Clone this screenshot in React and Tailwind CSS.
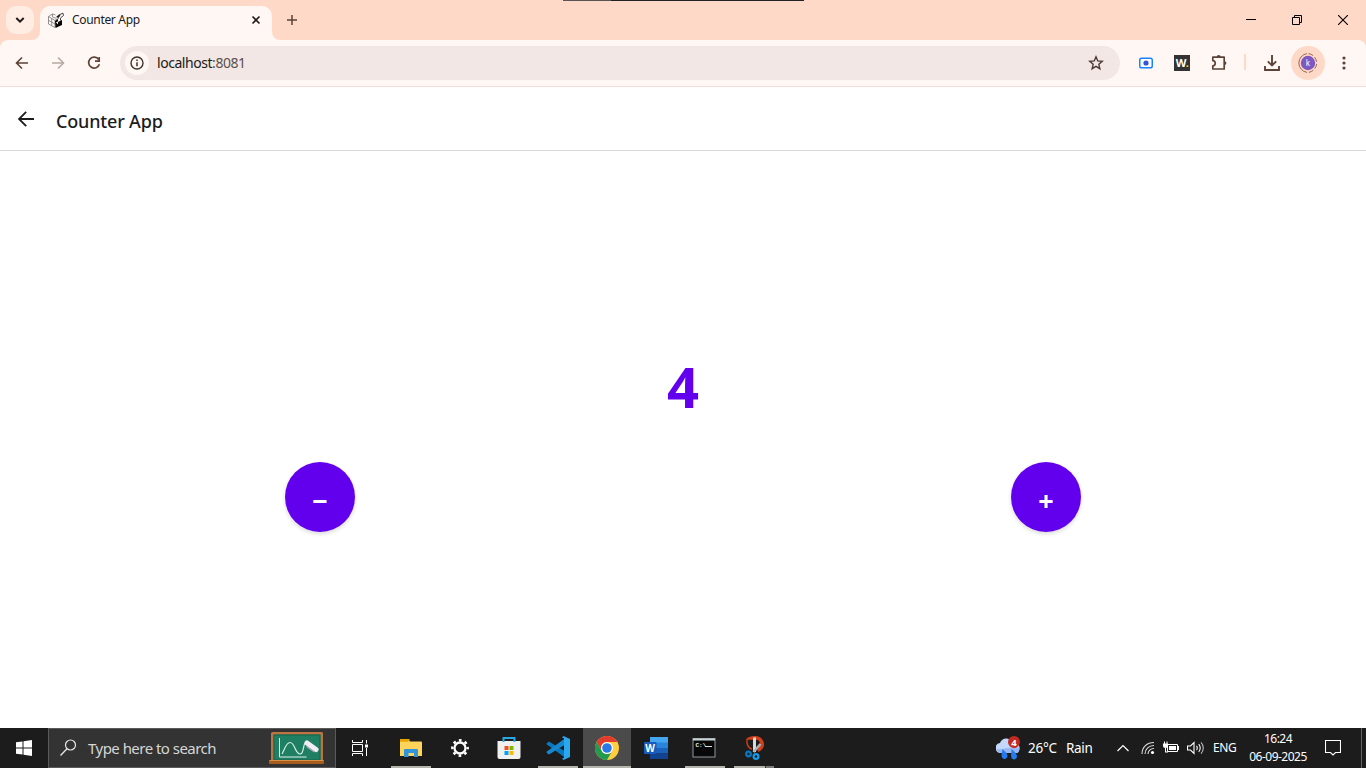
import React from "react";

const Svg = ({ w, h, children, className = "" }) => (
  <svg width={w} height={h} viewBox={`0 0 ${w} ${h}`} fill="none" className={`block shrink-0 ${className}`}>
    {children}
  </svg>
);

const Slot = ({ children, className = "" }) => (
  <div className={`flex h-[34px] w-9 shrink-0 items-center justify-center ${className}`}>{children}</div>
);

function TabStrip() {
  return (
    <div className="flex h-10 bg-[#ffd9c7]">
      <div className="ml-1.5 mt-1.5 flex h-7 w-7 items-center justify-center rounded-[10px] bg-[#ffece3]">
        <Svg w={10} h={8}>
          <path d="M1.3 2l3.7 3.7L8.7 2" stroke="#201a18" strokeWidth="2" />
        </Svg>
      </div>
      <Svg w={8} h={8} className="-ml-0.5 self-end">
        <path d="M8 0v8H0a8 8 0 0 0 8-8z" fill="#fff7f4" />
      </Svg>
      <div className="mt-1.5 flex w-[232px] items-center rounded-t-[10px] bg-[#fff7f4] pb-1.5 pl-2">
        <Svg w={16} h={16}>
          <path d="M.5 4.500l4-2.500 3 1M.5 4.500v7.500l6.500 3.500V8.500zM.5 8.300l6.500 3.700M3.700 6.500v7.200M7 8.500l4-2.500M4.500 2v3l4 1.500" stroke="#777" strokeWidth=".8" />
          <path d="M7 9l3-2v3l4-2v5l-6.500 3z" fill="#050505" />
          <path d="M8 5l3-2.500 1.500 1-2 2.500z" fill="#222" />
          <path d="M11 2.800l4-1.600.5 2.300-3 2.500v2.500" stroke="#444" />
          <path d="M8 10.500l2-1.200v3z" fill="#fff" />
        </Svg>
        <span className="ml-2 w-[174px] whitespace-nowrap text-[12px] leading-4 tracking-[-0.32px] text-[#201a18]">Counter App</span>
        <Svg w={12} h={12} className="ml-1">
          <path d="M2.500 2.500l7 7M9.500 2.500l-7 7" stroke="#201a18" strokeWidth="1.600" />
        </Svg>
      </div>
      <Svg w={8} h={8} className="self-end">
        <path d="M0 0v8h8a8 8 0 0 1-8-8z" fill="#fff7f4" />
      </Svg>
      <Svg w={12} h={12} className="ml-1.5 mt-[14px]">
        <path d="M6 1v10M1 6h10" stroke="#5c4338" strokeWidth="1.500" />
      </Svg>
      <div className="ml-[265px] flex h-px w-[241px] bg-[#202124]">
        <div className="w-12 bg-[#5a5454]" />
      </div>
      <div className="ml-auto flex h-10 items-center">
        <div className="flex w-[46px] justify-center">
          <Svg w={10} h={10}><path d="M0 4.500h10" stroke="#000" /></Svg>
        </div>
        <div className="flex w-[46px] justify-center">
          <Svg w={10} h={10}><path d="M.5 2.500h7v7h-7zM2.500 2.500v-2h7v7h-2" stroke="#000" /></Svg>
        </div>
        <div className="flex w-[46px] justify-center">
          <Svg w={10} h={10}><path d="M0 0l10 10M10 0L0 10" stroke="#000" strokeWidth="1.100" /></Svg>
        </div>
      </div>
    </div>
  );
}

function Toolbar() {
  return (
    <div className="h-[47px] bg-[#ffd9c7]">
      <div className="flex h-[47px] rounded-t-lg border-b border-[#f5dfd8] bg-[#fff7f4] px-1 pt-1.5">
        <Slot>
          <Svg w={16} h={16}><path d="M14 8H3M8 2.500L2.500 8 8 13.500" stroke="#5c4338" strokeWidth="1.600" /></Svg>
        </Slot>
        <Slot>
          <Svg w={16} h={16}><path d="M2 8h11M8 2.500l5.500 5.500L8 13.500" stroke="#b9aaa4" strokeWidth="1.600" /></Svg>
        </Slot>
        <Slot>
          <Svg w={16} h={16}>
            <path d="M12.700 4.500A5.500 5.500 0 1 0 13.400 9.300" stroke="#5c4338" strokeWidth="1.700" />
            <path d="M13.200 2v4.200H9" stroke="#5c4338" strokeWidth="1.700" />
          </Svg>
        </Slot>
        <div className="ml-2 mr-2 flex h-[34px] w-[1000px] items-center rounded-full bg-[#f2e7e4] pl-[5px]">
          <div className="flex h-6 w-6 items-center justify-center rounded-full bg-[#fff7f4]">
            <Svg w={14} h={14}>
              <circle cx="7" cy="7" r="6" stroke="#40322d" strokeWidth="1.400" />
              <path d="M7 6.200v4M7 3.500v1.500" stroke="#40322d" strokeWidth="1.500" />
            </Svg>
          </div>
          <span className="ml-2 text-[14px] leading-5 tracking-[-0.45px] text-[#201a18]">
            localhost<span className="text-[#5c504b]">:8081</span>
          </span>
          <Svg w={16} h={16} className="ml-auto mr-4">
            <path d="M8 1.800l1.750 4.150 4.500.4-3.400 2.950 1 4.400L8 11.350 4.150 13.700l1-4.400-3.400-2.950 4.500-.4z" stroke="#4a3a34" strokeWidth="1.400" />
          </Svg>
        </div>
        <Slot>
          <Svg w={14} h={12}>
            <rect x=".75" y="1.250" width="12.500" height="9.500" rx="1.800" stroke="#1a82ff" strokeWidth="1.500" fill="#fff" />
            <circle cx="7" cy="6" r="2.600" fill="#3454d8" />
          </Svg>
        </Slot>
        <Slot>
          <div className="flex h-4 w-4 items-center justify-center bg-[#333] text-[11px] font-bold leading-4 tracking-[-0.5px] text-white">
            W<span className="text-[#e8d44d]">.</span>
          </div>
        </Slot>
        <Slot>
          <Svg w={18} h={18} className="ml-0.5">
            <path d="M2.800 3.200H14.200V15H2.800V11.800C6 11.800 6 6.600 2.800 6.600z" stroke="#5c4338" strokeWidth="1.700" strokeLinejoin="round" />
            <path d="M6.700 3a2 2 0 0 1 4 0zM14.500 7.200a1.900 1.900 0 0 1 0 3.800z" fill="#5c4338" />
          </Svg>
        </Slot>
        <div className="flex h-8 w-[18px] items-center justify-center">
          <div className="h-4 w-0.5 bg-[#ffd9c7]" />
        </div>
        <Slot>
          <Svg w={16} h={16}>
            <path d="M8 0v10M3.800 6.300L8 10.500l4.200-4.200M1 11v4h14v-4" stroke="#5c4338" strokeWidth="1.900" />
          </Svg>
        </Slot>
        <Slot>
          <div className="flex h-[34px] w-[34px] shrink-0 items-center justify-center rounded-full bg-[#ffd9c7]">
            <svg width="20" height="20" viewBox="0 0 20 20" fill="none">
              <path d="M9 .6A9.500 9.500 0 0 0 9 19.400" stroke="#8f6a55" strokeWidth="1" />
              <path d="M10.500 .6A9.500 9.500 0 0 1 10.500 19.400" stroke="#8f6a55" strokeWidth="1" strokeDasharray="5 2.200" />
              <circle cx="10" cy="10" r="7.200" fill="#7e57c2" />
              <text x="10" y="12.800" textAnchor="middle" fontSize="8" fill="#fff">k</text>
            </svg>
          </div>
        </Slot>
        <Slot>
          <Svg w={4} h={16}>
            <circle cx="2" cy="3" r="1.600" fill="#5c4338" />
            <circle cx="2" cy="8" r="1.600" fill="#5c4338" />
            <circle cx="2" cy="13" r="1.600" fill="#5c4338" />
          </Svg>
        </Slot>
      </div>
    </div>
  );
}

const RoundButton = ({ children }) => (
  <button className="flex h-[70px] w-[70px] items-center justify-center rounded-full bg-[#6200ee] pt-2 text-[27px] font-bold leading-8 text-white shadow-[0_2px_4px_rgba(0,0,0,0.15)]">
    {children}
  </button>
);

function Counter() {
  return (
    <main className="flex min-h-0 flex-1 flex-col bg-white">
      <div className="flex h-16 items-center border-b border-[#d8d8d8]">
        <Svg w={16} h={16} className="ml-[18px]">
          <path d="M16 8H1.500M8.200 .8L1 8l7.200 7.200" stroke="#1c1c1e" strokeWidth="1.800" />
        </Svg>
        <span className="ml-[22px] pt-1 text-[18px] font-medium leading-6 tracking-[-0.18px] text-[#1c1c1e]">Counter App</span>
      </div>
      <div className="flex flex-1 flex-col pt-[198px]">
        <div className="text-center text-[56px] font-bold leading-[74px] text-[#6200ee]">4</div>
        <div className="mt-[39px] flex justify-between px-[285px]">
          <RoundButton>−</RoundButton>
          <RoundButton>+</RoundButton>
        </div>
      </div>
    </main>
  );
}

const Task = ({ children, active, open, stacked }) => (
  <div className={`mr-px flex h-10 w-12 shrink-0 flex-col items-center ${active ? "bg-[#4b4b4b]" : ""}`}>
    <div className="flex h-[38px] items-center pt-0.5">{children}</div>
    {active && <div className="h-0.5 w-12 bg-[#b5b5ae]" />}
    {open && (
      <div className="flex h-0.5 w-10 justify-end bg-[#b5b5ae]">
        {stacked && <div className="w-[9px] border-l border-[#333] bg-[#7b7b78]" />}
      </div>
    )}
  </div>
);

function Taskbar() {
  return (
    <footer className="flex h-10 shrink-0 bg-[#1c1c1c] text-white">
      <div className="flex w-12 items-center justify-center">
        <Svg w={16} h={16}>
          <path d="M0 2.300L6.500 1.400V7.500H0zM7.500 1.200L16 0v7.500H7.500zM0 8.500h6.500v6.100L0 13.700zM7.500 8.500H16V16l-8.500-1.200z" fill="#fff" />
        </Svg>
      </div>
      <div className="flex w-72 items-center border border-[#5a5a5a] bg-[#333]">
        <Svg w={18} h={18} className="ml-2.5">
          <circle cx="11.500" cy="6" r="5" stroke="#e8e8e8" strokeWidth="1.200" />
          <path d="M8 9.800L1.500 16.500" stroke="#e8e8e8" strokeWidth="1.300" />
        </Svg>
        <span className="ml-[11px] whitespace-nowrap text-[15px] leading-5 tracking-[-0.53px] text-[#d6d6d6]">Type here to search</span>
        <Svg w={56} h={34} className="ml-auto mr-2.5">
          <rect x="2" y="1" width="52" height="30" rx="1.500" fill="#bd7440" />
          <rect x="4.500" y="3.500" width="47" height="26" fill="#1f7f63" />
          <rect x="5" y="4" width="46" height="25" stroke="#17644f" />
          <rect x="0" y="29" width="55" height="4" rx="1" fill="#a75c20" />
          <path d="M.5 29.500h54" stroke="#d99043" />
          <path d="M10.500 7v19h27" stroke="#e4f2e8" strokeWidth="1" />
          <path d="M13 23c3-5 4-11.500 8-11.500 5 0 5 11.500 10 11.500 4 0 2.500-7 5-11" stroke="#d7efe0" strokeWidth="1.200" />
          <path d="M38 12l9 6.500" stroke="#f2edf5" strokeWidth="5" strokeLinecap="round" />
          <path d="M37.500 15.500l8 5.500" stroke="#b7adbd" strokeWidth="1.200" />
        </Svg>
      </div>
      <div className="mr-[3px] flex w-12 items-center justify-center">
        <Svg w={16} h={16}>
          <path d="M.5 0v2.500h10V0M.5 16v-2.500h10V16M.5 4.500h10v7H.5zM14.500 0v3.500M14.500 8v8" stroke="#fff" />
          <path d="M13 4.500h3v3h-3z" fill="#fff" />
        </Svg>
      </div>
      <Task open>
        <Svg w={22} h={20}>
          <path d="M0 1.500h8.500l1.500 2h11a1 1 0 0 1 1 1V18H0z" fill="#ffd45a" />
          <path d="M0 1h9l1 1-2 1.800H0z" fill="#e8a500" />
          <path d="M4 19v-7a1 1 0 0 1 1-1h12a1 1 0 0 1 1 1v7h-4v-4H8.500v4z" fill="#3295dc" />
        </Svg>
      </Task>
      <Task>
        <Svg w={20} h={20}>
          <circle cx="10" cy="10" r="5.500" stroke="#fff" strokeWidth="2.300" />
          <circle cx="10" cy="10" r="7.700" stroke="#fff" strokeWidth="2.400" strokeDasharray="2.700 3.347" strokeDashoffset="1.350" />
        </Svg>
      </Task>
      <Task>
        <Svg w={24} h={24}>
          <path d="M.5 5h23v16a2 2 0 0 1-2 2h-19a2 2 0 0 1-2-2z" fill="#f0f0f0" />
          <path d="M6.500 6V2h11v4" stroke="#28a8e5" strokeWidth="2" />
          <path d="M7.500 10h4v4h-4z" fill="#f25022" />
          <path d="M12.500 10h4v4h-4z" fill="#7fba00" />
          <path d="M7.500 15h4v4h-4z" fill="#00a4ef" />
          <path d="M12.500 15h4v4h-4z" fill="#ffb900" />
        </Svg>
      </Task>
      <Task open>
        <Svg w={24} h={24}>
          <path d="M1.300 7.800L18 20l.8-3.800L3 6.300z" fill="#0879bf" stroke="#0879bf" strokeWidth="1.500" strokeLinejoin="round" />
          <path d="M1.300 16.200L18 4l.8 3.800L3 17.700z" fill="#1688cf" stroke="#1688cf" strokeWidth="1.500" strokeLinejoin="round" />
          <path d="M17.500 0L24 3v18l-6.500 3L16 22.500l2-.8V2.300l-2-.8z" fill="#29a8f0" />
        </Svg>
      </Task>
      <Task active>
        <Svg w={24} h={24}>
          <circle cx="12" cy="12" r="12" fill="#ffcd40" />
          <path d="M1.600 6A12 12 0 0 1 22.400 6H12a6 6 0 0 0-5.200 9z" fill="#e33b2e" />
          <path d="M1.600 6A12 12 0 0 0 12 24l5.200-9A6 6 0 0 1 6.800 15z" fill="#229b50" />
          <circle cx="12" cy="12" r="6" fill="#fff" />
          <circle cx="12" cy="12" r="4.800" fill="#2878e8" />
        </Svg>
      </Task>
      <Task>
        <Svg w={24} h={22}>
          <path d="M6 0h18v6H6z" fill="#43a6ef" />
          <path d="M6 5.500h18V11H6z" fill="#2985dc" />
          <path d="M6 11h18v5.500H6z" fill="#1b62bd" />
          <path d="M6 16.500h18V22H6z" fill="#124390" />
          <rect y="5" width="12.500" height="12" rx="1" fill="#185abd" />
          <text x="6.200" y="14.700" textAnchor="middle" fontSize="10" fontWeight="700" fill="#fff">W</text>
        </Svg>
      </Task>
      <Task open>
        <Svg w={24} h={20} className="-ml-0.5">
          <rect x="1" y=".5" width="22" height="18.500" fill="#080808" stroke="#8d979b" />
          <path d="M1 1.500h22" stroke="#c9d2d5" strokeWidth="2" />
          <text x="3.500" y="9" fontSize="6" fontFamily="Liberation Mono" fontWeight="700" fill="#eee">C:\</text>
          <path d="M13 8.500h7" stroke="#ddd" />
        </Svg>
      </Task>
      <Task open stacked>
        <Svg w={22} h={24} className="ml-1">
          <path d="M1 3C5-.5 12-1 16 2c5 5 3.500 11-2.500 14l-1.500-3c3-2 4-5 2-8C12 2.500 6 5 1 3z" fill="#d1401a" />
          <path d="M2 3c-.5 5 1 9 5 10" stroke="#cf3b16" strokeWidth="1.500" />
          <path d="M9.500 1.500V16" stroke="#d8dadb" strokeWidth="3" />
          <path d="M15.500 8l-7 8" stroke="#adb2b4" strokeWidth="2.500" />
          <circle cx="3.500" cy="18" r="2.300" stroke="#0878c4" strokeWidth="2.200" />
          <circle cx="11" cy="20.500" r="2.400" stroke="#159ae5" strokeWidth="2.200" />
        </Svg>
      </Task>
      <div className="ml-auto flex items-center">
        <Svg w={25} h={25} className="mt-px">
          <path d="M5 17a5 5 0 0 1-1-10A7 7 0 0 1 16 5c4 0 8 3 7.500 7.500S21 17 20 17z" fill="#c3d8fa" />
          <path d="M5 17a5 5 0 0 1-4.500-4C7 14 14 10 23.500 12c0 4-2 5-3.500 5z" fill="#98b8f3" />
          <path d="M6.500 13c2.500 2.500 4.500 4 5 6.500a3 3 0 0 1-5.500 2c-1-2 .2-5 .5-8.500zM15.500 13c3 2.500 5 4.500 5.500 7a3 3 0 0 1-5.500 2c-1-2 0-5 0-9z" fill="#247bf0" />
          <circle cx="18" cy="6" r="6" fill="#c42b20" />
          <text x="18" y="9.500" textAnchor="middle" fontSize="9.500" fontWeight="700" fill="#fff">4</text>
        </Svg>
        <span className="ml-[7px] w-[38px] text-[13.5px] leading-5 tracking-[-0.2px]">26°C</span>
        <span className="w-[50px] text-[13.5px] leading-5 tracking-[-0.3px]">Rain</span>
        <Svg w={14} h={10}><path d="M1.500 8L7 2.500 12.500 8" stroke="#fff" strokeWidth="1.200" /></Svg>
        <Svg w={14} h={14} className="ml-[11px]">
          <path d="M1 13C1 6 6 1.500 13 1.500M4 13c0-5 4-8.500 9-8.500M7 13c0-3 2.500-5.500 6-5.500" stroke="#ddd" strokeWidth="1.100" />
          <circle cx="11.500" cy="11.500" r="1.600" fill="#fff" />
        </Svg>
        <Svg w={16} h={14} className="ml-2">
          <path d="M4.500 3.500h10v7H4.500zM15.500 5v4" stroke="#fff" />
          <path d="M6 5h7v4H6z" fill="#fff" />
          <path d="M0 2.500h5v2a2.500 2.500 0 0 1-5 0zM1 .500h1v2H1zM3.500.500h1v2h-1zM2 7h1v3.500h2v1H2z" fill="#fff" />
        </Svg>
        <Svg w={18} h={14} className="ml-2">
          <path d="M.5 5h3L7 1.500v11L3.500 9h-3z" stroke="#fff" strokeWidth="1.100" />
          <path d="M9.500 5c1 1 1 3 0 4M11.700 3.200c2 2 2 5.600 0 7.600" stroke="#fff" strokeWidth="1.100" />
          <path d="M14 1.300c3 3 3 8.400 0 11.400" stroke="#bbb" strokeWidth="1.100" />
        </Svg>
        <span className="ml-2 w-[27px] text-[12px] leading-5 tracking-[-0.4px]">ENG</span>
        <div className="flex w-[76px] flex-col items-center text-[12px] leading-[18px] tracking-[-0.5px]">
          <span>16:24</span>
          <span className="whitespace-nowrap">06-09-2025</span>
        </div>
        <Svg w={16} h={16} className="ml-[9px] mr-5">
          <path d="M.5.500h15v12h-5L8 15l-2.500-2.500h-5z" stroke="#fff" strokeWidth="1.100" />
        </Svg>
        <div className="mr-1 h-10 w-px bg-[#656565]" />
      </div>
    </footer>
  );
}

export default function App() {
  return (
    <div className="flex h-screen w-full flex-col overflow-hidden font-['Noto_Sans','Open_Sans',sans-serif]">
      <TabStrip />
      <Toolbar />
      <Counter />
      <Taskbar />
    </div>
  );
}
